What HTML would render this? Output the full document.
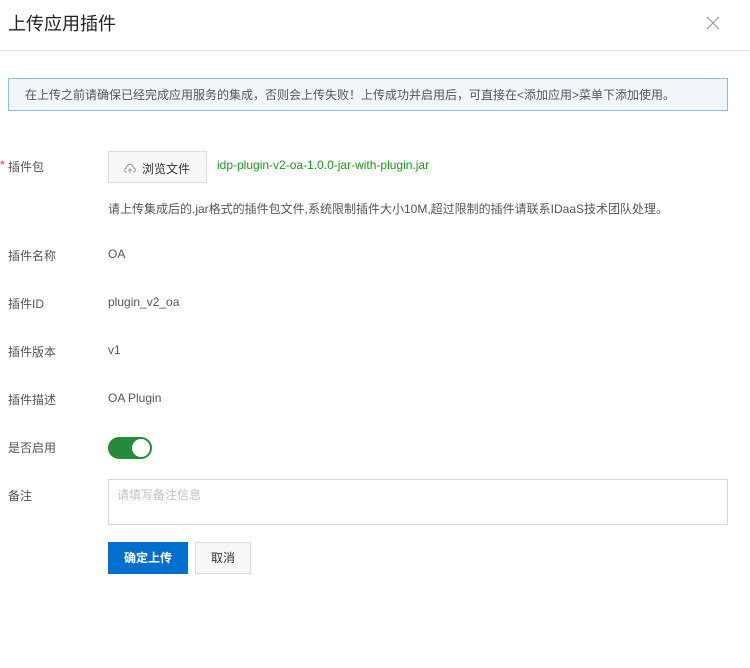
<!DOCTYPE html>
<html><head><meta charset="utf-8"><style>
*{box-sizing:border-box;margin:0;padding:0}
body{width:750px;height:668px;background:#fff;font-family:"Liberation Sans","Noto Sans CJK SC",sans-serif;font-size:12px;color:#333;position:relative;overflow:hidden}
.a{position:absolute}
.lbl{position:absolute;left:8px;color:#555;font-size:12px}
.val{position:absolute;left:108px;color:#555;font-size:12px}
</style></head><body>
<div class="a" style="left:8px;top:10px;font-size:18px;color:#222">上传应用插件</div>
<svg class="a" style="left:706px;top:16px" width="14" height="14"><path d="M1 1L13 13M13 1L1 13" stroke="#999" stroke-width="1.2"/></svg>
<div class="a" style="left:0;top:50px;width:750px;height:1px;background:#e5e5e5"></div>
<div class="a" style="left:8px;top:78px;width:720px;height:33px;border:1px solid #8cbbe6;background:#f1f6fb;padding:9px 16px;color:#555;font-size:12px;line-height:15px">在上传之前请确保已经完成应用服务的集成，否则会上传失败！上传成功并启用后，可直接在&lt;添加应用&gt;菜单下添加使用。</div>
<div class="a" style="left:0;top:158px;color:#e33;font-size:12px">*</div>
<div class="lbl" style="top:158px">插件包</div>
<div class="a" style="left:108px;top:151px;width:99px;height:32px;border:1px solid #ddd;background:#f7f7f7;font-size:12px;color:#333;padding:8px 0 0 15px">
<svg style="vertical-align:-1px;margin-right:6px" width="12" height="10"><path d="M3 8H2.5A2 2 0 0 1 2.5 4A3.5 3.5 0 0 1 9.5 4A2 2 0 0 1 9.5 8H9M6 9V5M4.5 6.5L6 5L7.5 6.5" fill="none" stroke="#999" stroke-width="1"/></svg>浏览文件</div>
<div class="a" style="left:217px;top:158px;color:#1a9a1a">idp-plugin-v2-oa-1.0.0-jar-with-plugin.jar</div>
<div class="val" style="top:200px">请上传集成后的.jar格式的插件包文件,系统限制插件大小10M,超过限制的插件请联系IDaaS技术团队处理。</div>
<div class="lbl" style="top:247px">插件名称</div><div class="val" style="top:247px">OA</div>
<div class="lbl" style="top:295px">插件ID</div><div class="val" style="top:295px">plugin_v2_oa</div>
<div class="lbl" style="top:343px">插件版本</div><div class="val" style="top:343px">v1</div>
<div class="lbl" style="top:391px">插件描述</div><div class="val" style="top:391px">OA Plugin</div>
<div class="lbl" style="top:439px">是否启用</div>
<div class="a" style="left:108px;top:437px;width:44px;height:22px;border-radius:11px;background:#228b3c"><div class="a" style="left:24px;top:2px;width:18px;height:18px;border-radius:50%;background:#fff"></div></div>
<div class="lbl" style="top:487px">备注</div>
<div class="a" style="left:108px;top:479px;width:620px;height:46px;border:1px solid #d5d9de;padding:6px 8px;color:#bcc3cc;font-size:12px">请填写备注信息</div>
<div class="a" style="left:108px;top:542px;width:80px;height:32px;background:#0070cc;color:#fff;font-weight:bold;text-align:center;line-height:32px">确定上传</div>
<div class="a" style="left:195px;top:542px;width:56px;height:32px;border:1px solid #ddd;background:#f7f7f7;color:#333;text-align:center;line-height:30px">取消</div>
</body></html>
